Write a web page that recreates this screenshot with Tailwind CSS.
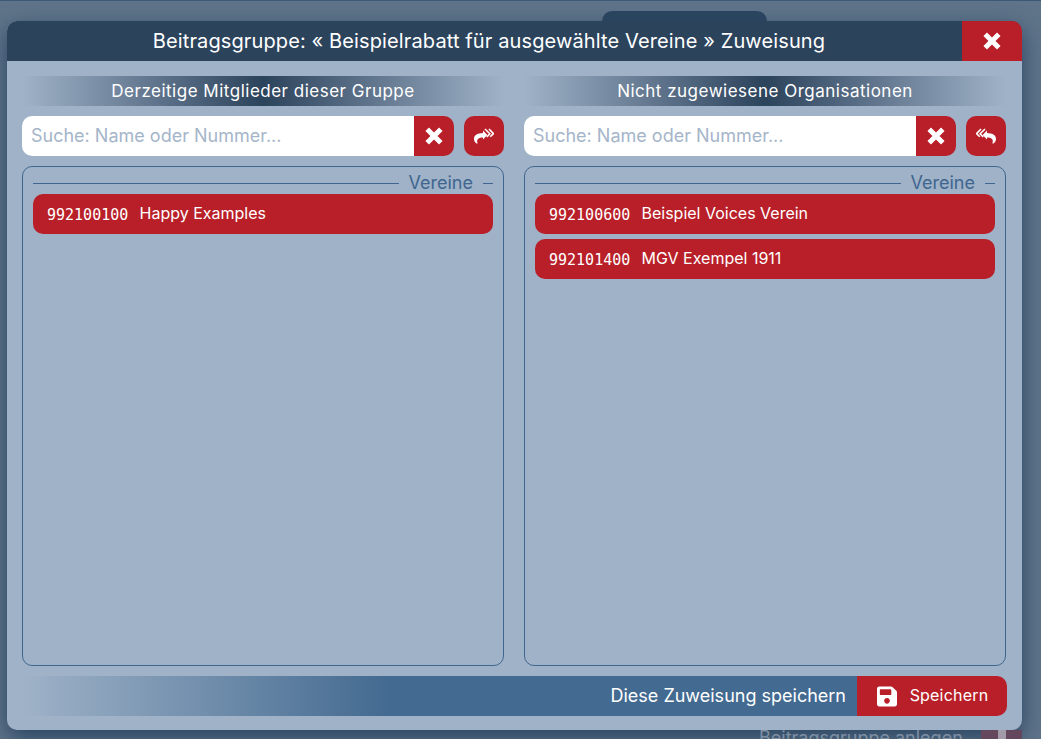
<!doctype html>
<html lang="de">
<head>
  <meta charset="utf-8">
  <title>Beitragsgruppe Zuweisung</title>
  <script src="https://cdn.jsdelivr.net/npm/@tailwindcss/browser@4"></script>
</head>
<body class="h-[739px] w-[1041px] overflow-hidden relative bg-[#5f7489] font-['Inter',sans-serif] border-t border-[#3b5878]">

  <!-- page behind the dialog -->
  <div class="absolute left-[602px] top-[10px] w-[165px] h-[20px] rounded-t-[10px] bg-[#2b455f] z-10"></div>

  <!-- dialog -->
  <div class="absolute left-[7px] top-[20px] w-[1015px] h-[709px] rounded-[10px] bg-[#9fb2c8] shadow-[0_8px_22px_#294462] z-20 overflow-hidden">
    <header class="h-[40px] bg-[#2c435c] flex">
      <h1 class="flex-1 text-center text-white text-[20px] tracking-[0.12px] leading-[40px] pl-[9px]">Beitragsgruppe: « Beispielrabatt für ausgewählte Vereine » Zuweisung</h1>
      <button class="w-[60px] h-[40px] bg-[#b91f28] flex items-center justify-center">
        <svg class="w-[18px] h-[18px]" viewBox="0 0 18 18"><path d="M2.2 2.2 15.8 15.8M15.8 2.2 2.2 15.8" stroke="#fff" stroke-width="5"/></svg>
      </button>
    </header>

    <div class="pl-[15px] pr-[16px] pt-[15px]">
      <div class="grid grid-cols-2 gap-[20px]">

        <!-- members -->
        <section class="flex flex-col gap-[10px]">
          <h2 class="h-[30px] leading-[30px] text-center text-white text-[17px] tracking-[0.5px] bg-[linear-gradient(to_right,transparent,#2c435c_50%,transparent)]">Derzeitige Mitglieder dieser Gruppe</h2>
          <div class="flex gap-[10px]">
            <div class="flex flex-1 h-[40px]">
              <input class="flex-1 min-w-0 h-[40px] rounded-l-[10px] bg-white pl-[9px] pr-[9px] pb-[2px] text-[18px] outline-none placeholder:text-[#a5b5c9]" placeholder="Suche: Name oder Nummer...">
              <button class="w-[40px] h-[40px] rounded-r-[10px] bg-[#b91f28] flex items-center justify-center">
                <svg class="w-[18px] h-[18px]" viewBox="0 0 18 18"><path d="M2.2 2.2 15.8 15.8M15.8 2.2 2.2 15.8" stroke="#fff" stroke-width="5"/></svg>
              </button>
            </div>
            <button class="w-[40px] h-[40px] rounded-[10px] bg-[#b91f28] flex items-center justify-center">
              <svg class="w-[20px] h-[16px]" viewBox="0 0 20 16" fill="none">
                <path d="M13.4 7 9 2.6V5C4 5.2 0 6.6 0 11c0 2 1.2 3.6 2.6 4.6.5.3 1-.1.9-.6C2.2 11 5 9.6 9 9.5v2z" fill="#fff"/>
                <path d="M11 1 15.8 5.8 12.8 9M15 1 19.4 5.6 16.2 8.8" stroke="#fff" stroke-width="1.6"/>
              </svg>
            </button>
          </div>
          <div class="h-[500px] rounded-[10px] border border-[#40668f] px-[10px]">
            <div class="flex items-center h-[27px] pt-[6px] text-[#40668f] text-[18px]">
              <span class="flex-1 h-px bg-[#40668f]"></span>
              <span class="px-[10px] mb-[2px]">Vereine</span>
              <span class="w-[10px] h-px bg-[#40668f]"></span>
            </div>
            <ul class="flex flex-col gap-[5px]">
              <li class="h-[40px] rounded-[10px] bg-[#b91f28] text-white flex items-center pl-[14px]">
                <span class="font-['DejaVu_Sans_Mono',monospace] text-[15px] w-[92.5px] mt-[2px]">992100100</span>
                <span class="text-[16px] mb-[2px]">Happy Examples</span>
              </li>
            </ul>
          </div>
        </section>

        <!-- not assigned -->
        <section class="flex flex-col gap-[10px]">
          <h2 class="h-[30px] leading-[30px] text-center text-white text-[17px] tracking-[0.5px] bg-[linear-gradient(to_right,transparent,#2c435c_50%,transparent)]">Nicht zugewiesene Organisationen</h2>
          <div class="flex gap-[10px]">
            <div class="flex flex-1 h-[40px]">
              <input class="flex-1 min-w-0 h-[40px] rounded-l-[10px] bg-white pl-[9px] pr-[9px] pb-[2px] text-[18px] outline-none placeholder:text-[#a5b5c9]" placeholder="Suche: Name oder Nummer...">
              <button class="w-[40px] h-[40px] rounded-r-[10px] bg-[#b91f28] flex items-center justify-center">
                <svg class="w-[18px] h-[18px]" viewBox="0 0 18 18"><path d="M2.2 2.2 15.8 15.8M15.8 2.2 2.2 15.8" stroke="#fff" stroke-width="5"/></svg>
              </button>
            </div>
            <button class="w-[40px] h-[40px] rounded-[10px] bg-[#b91f28] flex items-center justify-center">
              <svg class="w-[20px] h-[16px] -scale-x-100" viewBox="0 0 20 16" fill="none">
                <path d="M13.4 7 9 2.6V5C4 5.2 0 6.6 0 11c0 2 1.2 3.6 2.6 4.6.5.3 1-.1.9-.6C2.2 11 5 9.6 9 9.5v2z" fill="#fff"/>
                <path d="M11 1 15.8 5.8 12.8 9M15 1 19.4 5.6 16.2 8.8" stroke="#fff" stroke-width="1.6"/>
              </svg>
            </button>
          </div>
          <div class="h-[500px] rounded-[10px] border border-[#40668f] px-[10px]">
            <div class="flex items-center h-[27px] pt-[6px] text-[#40668f] text-[18px]">
              <span class="flex-1 h-px bg-[#40668f]"></span>
              <span class="px-[10px] mb-[2px]">Vereine</span>
              <span class="w-[10px] h-px bg-[#40668f]"></span>
            </div>
            <ul class="flex flex-col gap-[5px]">
              <li class="h-[40px] rounded-[10px] bg-[#b91f28] text-white flex items-center pl-[14px]">
                <span class="font-['DejaVu_Sans_Mono',monospace] text-[15px] w-[92.5px] mt-[2px]">992100600</span>
                <span class="text-[16px] mb-[2px]">Beispiel Voices Verein</span>
              </li>
              <li class="h-[40px] rounded-[10px] bg-[#b91f28] text-white flex items-center pl-[14px]">
                <span class="font-['DejaVu_Sans_Mono',monospace] text-[15px] w-[92.5px] mt-[2px]">992101400</span>
                <span class="text-[16px] mb-[2px]">MGV Exempel 1911</span>
              </li>
            </ul>
          </div>
        </section>
      </div>

      <!-- save bar -->
      <div class="mt-[10px] h-[40px] w-[985px] flex">
        <div class="flex-1 flex items-center justify-end pr-[11px] pb-[2px] text-white text-[18px] bg-[linear-gradient(to_right,transparent,#436a90_44%)]">Diese Zuweisung speichern</div>
        <button class="w-[150px] h-[40px] rounded-r-[10px] bg-[#b91f28] text-white text-[16px] tracking-[0.2px] flex items-center justify-center gap-[13px] pl-[1px]">
          <svg class="w-[20px] h-[23px]" viewBox="0 0 448 512" fill="#fff"><path d="M433.941 129.941l-83.882-83.882A48 48 0 0 0 316.118 32H48C21.49 32 0 53.49 0 80v352c0 26.51 21.49 48 48 48h352c26.51 0 48-21.49 48-48V163.882a48 48 0 0 0-14.059-33.941zM224 416c-35.346 0-64-28.654-64-64 0-35.346 28.654-64 64-64s64 28.654 64 64c0 35.346-28.654 64-64 64zm96-304.52V212c0 6.627-5.373 12-12 12H76c-6.627 0-12-5.373-12-12V108c0-6.627 5.373-12 12-12h228.52c3.183 0 6.235 1.264 8.485 3.515l3.48 3.48A11.996 11.996 0 0 1 320 111.48z"/></svg>
          <span class="mb-[2px]">Speichern</span>
        </button>
      </div>
    </div>
  </div>

  <!-- bottom of the page, only its top shows below the dialog -->
  <div class="absolute left-[759px] top-[729px] w-[263px] h-[9px] overflow-hidden z-30">
    <div class="-mt-[4px] flex items-start justify-between text-[#7e8fa3] text-[18px] leading-[24px]">
      <span>Beitragsgruppe anlegen</span>
      <span class="w-[41px] h-[24px] bg-[#65475d] flex justify-center pt-[4px]">
        <span class="w-[8px] h-[24px] bg-[#a39aa8]"></span>
      </span>
    </div>
  </div>
</body>
</html>
